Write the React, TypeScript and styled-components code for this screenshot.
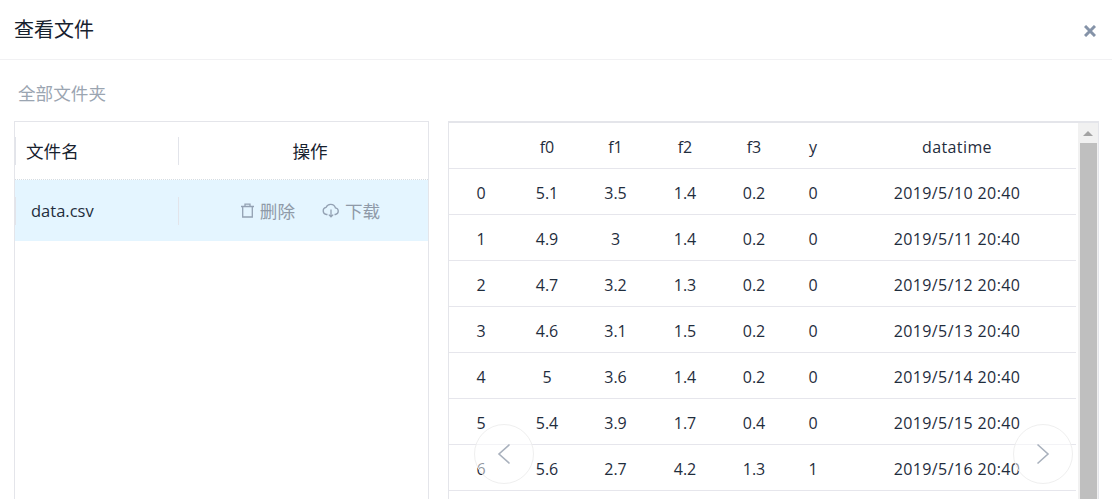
import React from 'react';
import styled, {createGlobalStyle} from 'styled-components';

const COLUMNS = [64, 68, 69, 70, 68, 50, 238];
const HEADERS = ['', 'f0', 'f1', 'f2', 'f3', 'y', 'datatime'];
const ROWS = [
    ['0', '5.1', '3.5', '1.4', '0.2', '0', '2019/5/10 20:40'],
    ['1', '4.9', '3', '1.4', '0.2', '0', '2019/5/11 20:40'],
    ['2', '4.7', '3.2', '1.3', '0.2', '0', '2019/5/12 20:40'],
    ['3', '4.6', '3.1', '1.5', '0.2', '0', '2019/5/13 20:40'],
    ['4', '5', '3.6', '1.4', '0.2', '0', '2019/5/14 20:40'],
    ['5', '5.4', '3.9', '1.7', '0.4', '0', '2019/5/15 20:40'],
    ['6', '5.6', '2.7', '4.2', '1.3', '1', '2019/5/16 20:40'],
];

const App = () => {
    return (
        <Page>
            <GlobalStyle/>
            <Header>
                <Title>查看文件</Title>
                <CloseButton aria-label='close'>
                    <svg width='12' height='12' viewBox='0 0 12 12'>
                        <path d='M1 1 L11 11 M11 1 L1 11' stroke='#8593a8' strokeWidth='3' fill='none'/>
                    </svg>
                </CloseButton>
            </Header>
            <Breadcrumb>全部文件夹</Breadcrumb>
            <Body>
                <FilePanel>
                    <FileHead>
                        <NameCell>
                            <Divider/>
                            <HeadLabel>文件名</HeadLabel>
                        </NameCell>
                        <ActionCell>
                            <Divider/>
                            <HeadLabel>操作</HeadLabel>
                        </ActionCell>
                    </FileHead>
                    <FileRow>
                        <NameCell>
                            <Divider/>
                            <FileName>data.csv</FileName>
                        </NameCell>
                        <ActionCell>
                            <Divider/>
                            <ActionLink>
                                <svg width='15' height='15' viewBox='0 0 15 15' fill='none' stroke='#93a1b3' strokeWidth='1.3'>
                                    <path d='M1 3.5 H14 M5 3.5 V1.2 H10 V3.5 M2.7 3.5 V14 H12.3 V3.5'/>
                                </svg>
                                删除
                            </ActionLink>
                            <ActionLink>
                                <svg width='18' height='15' viewBox='0 0 18 15' fill='none' stroke='#93a1b3' strokeWidth='1.3'>
                                    <path d='M5.5 11.5 H4.5 A3.6 3.6 0 0 1 4 4.4 A5 5 0 0 1 13.4 4.8 A3.4 3.4 0 0 1 13.5 11.5 H12.5'/>
                                    <path d='M9 6.5 V13.8 M6.8 11.6 L9 13.8 L11.2 11.6'/>
                                </svg>
                                下载
                            </ActionLink>
                        </ActionCell>
                    </FileRow>
                </FilePanel>
                <PreviewPanel>
                    <TableArea>
                        <Row>
                            {HEADERS.map((text, i) => (
                                <Cell key={i} $width={COLUMNS[i]}>{text}</Cell>
                            ))}
                        </Row>
                        {ROWS.map((row) => (
                            <Row key={row[0]}>
                                {row.map((text, i) => (
                                    <Cell key={i} $width={COLUMNS[i]}>{text}</Cell>
                                ))}
                            </Row>
                        ))}
                    </TableArea>
                    <Scrollbar>
                        <ScrollArrow/>
                        <ScrollThumb/>
                    </Scrollbar>
                    <PagerButton $side='left'>
                        <svg width='14' height='22' viewBox='0 0 14 22' fill='none' stroke='#a9b1bd' strokeWidth='1.6'>
                            <path d='M12.5 1.5 L2 11 L12.5 20.5'/>
                        </svg>
                    </PagerButton>
                    <PagerButton $side='right'>
                        <svg width='14' height='22' viewBox='0 0 14 22' fill='none' stroke='#a9b1bd' strokeWidth='1.6'>
                            <path d='M1.5 1.5 L12 11 L1.5 20.5'/>
                        </svg>
                    </PagerButton>
                </PreviewPanel>
            </Body>
        </Page>
    );
};

const GlobalStyle = createGlobalStyle`
    html, body {
        margin: 0;
        padding: 0;
        height: 100%;
        overflow: hidden;
        background: #fff;
    }
    * {
        box-sizing: border-box;
    }
`;

const Page = styled.div`
    display: flex;
    flex-direction: column;
    width: 1112px;
    height: 499px;
    overflow: hidden;
    color: #1f2d3d;
    font-family: "Open Sans", "Noto Sans CJK SC", sans-serif;
`;

const Header = styled.header`
    display: flex;
    align-items: center;
    justify-content: space-between;
    flex-shrink: 0;
    height: 60px;
    padding: 0 16px 0 14px;
    border-bottom: 1px solid #f1f1f3;
`;

const Title = styled.h1`
    margin: 0;
    font-size: 20px;
    font-weight: 400;
    line-height: 28px;
    color: #17212e;
`;

const CloseButton = styled.button`
    display: flex;
    padding: 0;
    border: 0;
    background: none;
    margin-top: 2px;
`;

const Breadcrumb = styled.div`
    flex-shrink: 0;
    height: 61px;
    padding: 20px 0 0 18px;
    font-size: 17.6px;
    line-height: 26px;
    color: #9ba5b1;
`;

const Body = styled.div`
    display: flex;
    flex: 1;
    min-height: 0;
    padding-left: 14px;
    gap: 19px;
`;

const FilePanel = styled.section`
    width: 415px;
    height: 400px;
    border: 1px solid #e4e5ea;
`;

const FileHead = styled.div`
    display: flex;
    align-items: center;
    height: 58px;
    border-bottom: 1px dotted #d5dde3;
`;

const FileRow = styled.div`
    display: flex;
    align-items: center;
    height: 61px;
    background: #e4f5ff;
`;

const NameCell = styled.div`
    display: flex;
    align-items: center;
    gap: 10px;
    width: 163px;
    height: 28px;
`;

const ActionCell = styled.div`
    display: flex;
    flex: 1;
    align-items: center;
    justify-content: center;
    gap: 27px;
    height: 28px;
    padding-left: 14px;
    position: relative;
`;

const Divider = styled.span`
    flex-shrink: 0;
    width: 1px;
    height: 100%;
    background: #e2e4ea;

    ${ActionCell} > & {
        position: absolute;
        left: 0;
        top: 0;
    }
`;

const HeadLabel = styled.span`
    font-size: 17.6px;
    line-height: 26px;
    color: #17212e;
`;

const FileName = styled.span`
    margin-left: 5px;
    font-size: 16.5px;
    line-height: 24px;
    color: #1f2d3d;
`;

const ActionLink = styled.span`
    display: inline-flex;
    align-items: center;
    gap: 5px;
    font-size: 17.6px;
    line-height: 24px;
    color: #8f9aa8;
`;

const PreviewPanel = styled.section`
    display: flex;
    position: relative;
    width: 651px;
    height: 400px;
    border: 1px solid #e4e5ea;
    border-top-width: 2px;
    border-left-width: 1px;
`;

const TableArea = styled.div`
    display: flex;
    flex-direction: column;
    width: 627px;
    flex-shrink: 0;
`;

const Row = styled.div`
    display: flex;
    flex-shrink: 0;
    height: 46px;
    border-bottom: 1px solid #e6e6ec;
`;

const Cell = styled.div<{$width: number}>`
    display: flex;
    align-items: center;
    justify-content: center;
    width: ${(props) => props.$width}px;
    padding-top: 2px;
    font-size: 16px;
    color: #1f2d3d;

    &:last-child {
        letter-spacing: 0.4px;
    }
`;

const Scrollbar = styled.div`
    display: flex;
    flex-direction: column;
    align-items: center;
    width: 21px;
    margin-left: 2px;
    background: #f1f1f1;
`;

const ScrollArrow = styled.span`
    flex-shrink: 0;
    width: 0;
    height: 0;
    margin: 8px 0 7px;
    border-left: 5px solid transparent;
    border-right: 5px solid transparent;
    border-bottom: 5px solid #a3a3a3;
`;

const ScrollThumb = styled.span`
    flex: 1;
    width: 17px;
    background: #bfbfbf;
`;

const PagerButton = styled.div<{$side: 'left' | 'right'}>`
    display: flex;
    align-items: center;
    justify-content: center;
    position: absolute;
    top: 301px;
    ${(props) => (props.$side === 'left' ? 'left: 25px;' : 'left: 564px;')}
    width: 60px;
    height: 60px;
    border: 1px solid #efefef;
    border-radius: 50%;
    background: rgba(255, 255, 255, 0.5);
`;

export default App;
